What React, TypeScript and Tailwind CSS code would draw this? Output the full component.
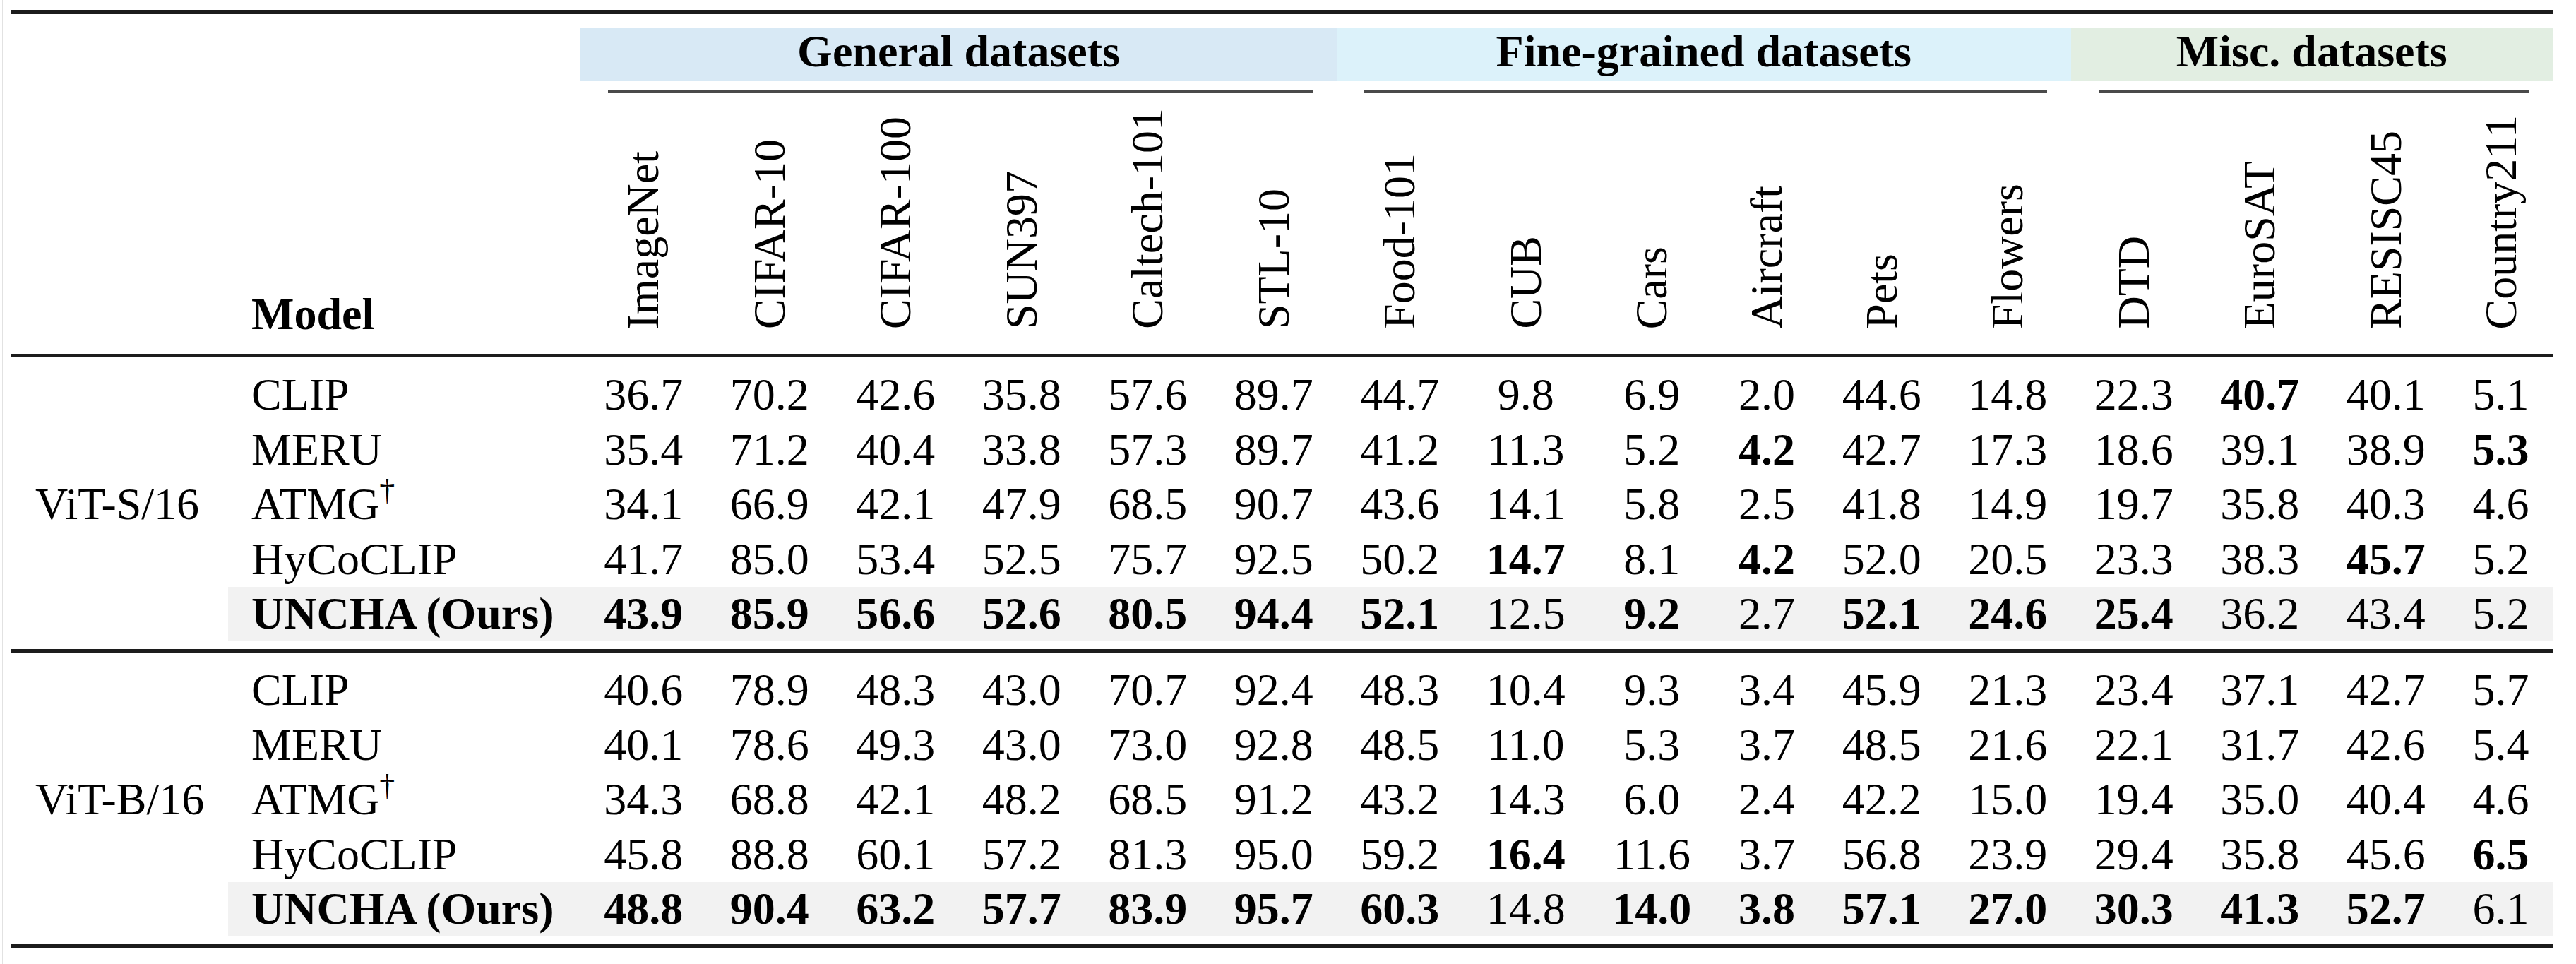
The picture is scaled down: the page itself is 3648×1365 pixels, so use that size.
import React from "react";

// column template shared by every row of the table
const GRID =
  "grid grid-cols-[308px_499px_repeat(9,178.5px)_147px_repeat(5,178.5px)_147px]";

const DATASETS = [
  "ImageNet",
  "CIFAR-10",
  "CIFAR-100",
  "SUN397",
  "Caltech-101",
  "STL-10",
  "Food-101",
  "CUB",
  "Cars",
  "Aircraft",
  "Pets",
  "Flowers",
  "DTD",
  "EuroSAT",
  "RESISC45",
  "Country211",
];

// "*" marks a bold (best) value
const GROUPS = [
  {
    backbone: "ViT-S/16",
    rows: [
      { model: "CLIP", vals: "36.7 70.2 42.6 35.8 57.6 89.7 44.7 9.8 6.9 2.0 44.6 14.8 22.3 *40.7 40.1 5.1" },
      { model: "MERU", vals: "35.4 71.2 40.4 33.8 57.3 89.7 41.2 11.3 5.2 *4.2 42.7 17.3 18.6 39.1 38.9 *5.3" },
      { model: "ATMG", dagger: true, vals: "34.1 66.9 42.1 47.9 68.5 90.7 43.6 14.1 5.8 2.5 41.8 14.9 19.7 35.8 40.3 4.6" },
      { model: "HyCoCLIP", vals: "41.7 85.0 53.4 52.5 75.7 92.5 50.2 *14.7 8.1 *4.2 52.0 20.5 23.3 38.3 *45.7 5.2" },
      { model: "UNCHA (Ours)", vals: "*43.9 *85.9 *56.6 *52.6 *80.5 *94.4 *52.1 12.5 *9.2 2.7 *52.1 *24.6 *25.4 36.2 43.4 5.2" },
    ],
  },
  {
    backbone: "ViT-B/16",
    rows: [
      { model: "CLIP", vals: "40.6 78.9 48.3 43.0 70.7 92.4 48.3 10.4 9.3 3.4 45.9 21.3 23.4 37.1 42.7 5.7" },
      { model: "MERU", vals: "40.1 78.6 49.3 43.0 73.0 92.8 48.5 11.0 5.3 3.7 48.5 21.6 22.1 31.7 42.6 5.4" },
      { model: "ATMG", dagger: true, vals: "34.3 68.8 42.1 48.2 68.5 91.2 43.2 14.3 6.0 2.4 42.2 15.0 19.4 35.0 40.4 4.6" },
      { model: "HyCoCLIP", vals: "45.8 88.8 60.1 57.2 81.3 95.0 59.2 *16.4 11.6 3.7 56.8 23.9 29.4 35.8 45.6 *6.5" },
      { model: "UNCHA (Ours)", vals: "*48.8 *90.4 *63.2 *57.7 *83.9 *95.7 *60.3 14.8 *14.0 *3.8 *57.1 *27.0 *30.3 *41.3 *52.7 6.1" },
    ],
  },
];

type Row = { model: string; vals: string; dagger?: boolean };

function Group({ backbone, rows }: { backbone: string; rows: Row[] }) {
  return (
    <div className={`${GRID} grid-rows-[repeat(5,77.5px)] pt-[14.5px] pb-[11px]`}>
      <div className="row-span-5 flex items-center pl-[35px]">{backbone}</div>
      {rows.map((r, i) => {
        const ours = i === rows.length - 1;
        const bg = ours ? "bg-[#f2f2f2]" : "";
        return (
          <React.Fragment key={r.model}>
            <div className={`flex items-center pl-[33px] ${bg} ${ours ? "font-bold" : ""}`}>
              <span>
                {r.model}
                {r.dagger && <span className="relative -top-[26px] text-[44px]">†</span>}
              </span>
            </div>
            {r.vals.split(" ").map((v, j) => {
              const bold = v.startsWith("*");
              return (
                <div key={j} className={`flex items-center justify-center ${bg} ${bold ? "font-bold" : ""}`}>
                  {bold ? v.slice(1) : v}
                </div>
              );
            })}
          </React.Fragment>
        );
      })}
    </div>
  );
}

const Rule = ({ h }: { h: string }) => <div className={`${h} w-full bg-[#1c1c1c]`} />;

export default function App() {
  return (
    <div className="flex min-h-screen bg-white">
      <div className="ml-[3px] w-px bg-[#e2e2e2]" />
      <div className="pl-[11px] pt-[14px] font-['Liberation_Serif','Times_New_Roman',serif] text-[64px] leading-none text-black">
        <div className="w-[3600px]">
          <Rule h="h-[6px]" />

          {/* dataset group headers */}
          <div className={`${GRID} mt-[20px] h-[75px] font-bold`}>
            <div className="col-span-2" />
            <div className="col-span-6 flex items-center justify-center bg-[#d8e9f5] pb-[10px]">General datasets</div>
            <div className="col-span-6 flex items-center justify-center bg-[#dcf2fa] pb-[10px]">Fine-grained datasets</div>
            <div className="col-span-4 flex items-center justify-center bg-[#e2eee2] pb-[10px]">Misc. datasets</div>
          </div>

          <div className={`${GRID} mt-[12px]`}>
            <div className="col-span-2" />
            <div className="col-span-6 ml-[39px] mr-[34px] h-[4px] bg-[#4a4a4a]" />
            <div className="col-span-6 ml-[39px] mr-[34px] h-[4px] bg-[#4a4a4a]" />
            <div className="col-span-4 ml-[39px] mr-[34px] h-[4px] bg-[#4a4a4a]" />
          </div>

          {/* column headers */}
          <div className={`${GRID} h-[370px]`}>
            <div />
            <div className="flex items-end pl-[33px] pb-[24px] font-bold">Model</div>
            {DATASETS.map((d) => (
              <div key={d} className="flex items-end justify-center pb-[35px]">
                <span className="rotate-180 whitespace-nowrap [writing-mode:vertical-rl]">{d}</span>
              </div>
            ))}
          </div>

          <Rule h="h-[5px]" />
          <Group {...GROUPS[0]} />
          <Rule h="h-[5px]" />
          <Group {...GROUPS[1]} />
          <Rule h="h-[6px]" />
        </div>
      </div>
    </div>
  );
}
